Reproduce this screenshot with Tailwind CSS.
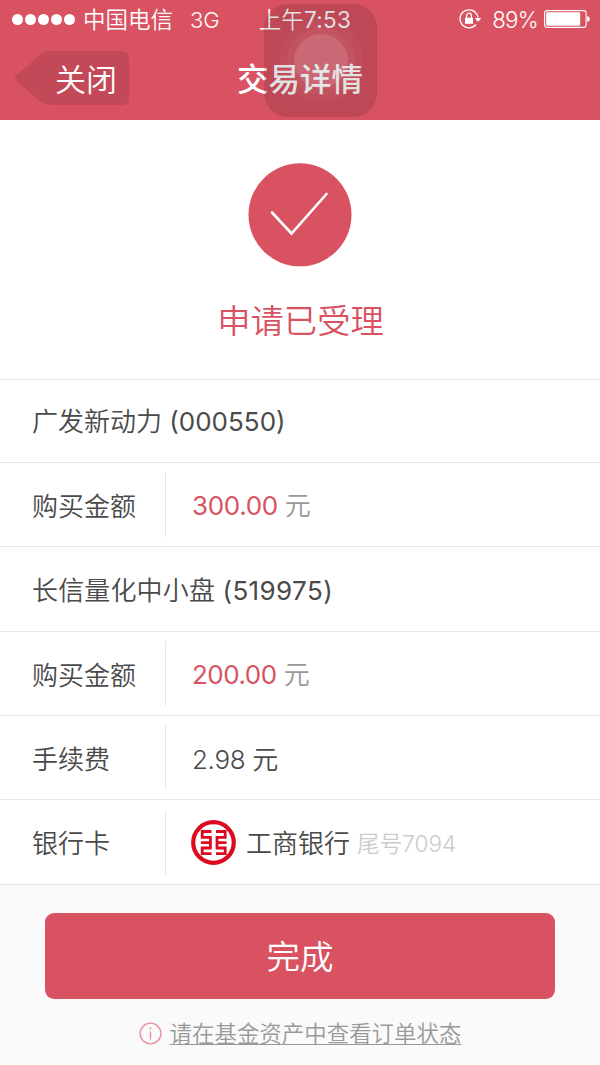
<!DOCTYPE html>
<html lang="zh-CN">
<head>
    <meta charset="UTF-8">
    <meta name="viewport" content="width=device-width, initial-scale=1.0">
    <title>交易详情</title>
    <script src="https://cdn.jsdelivr.net/npm/@tailwindcss/browser@4"></script>
</head>
<body class="bg-[#fafafa] font-[Inter,'Noto_Sans_CJK_SC',sans-serif] font-[350] text-[#4a4a4a] h-[1065px] overflow-hidden">
    <header class="relative bg-[#d95261] h-[120px] text-white">
        <!-- Status bar -->
        <div class="grid grid-cols-3 items-center h-[40px] pl-3 pr-[10px] text-[22.5px] leading-none">
            <div class="flex items-center whitespace-nowrap">
                <div class="flex gap-[2px] pb-[2px]">
                    <span class="size-[11px] rounded-full bg-white"></span>
                    <span class="size-[11px] rounded-full bg-white"></span>
                    <span class="size-[11px] rounded-full bg-white"></span>
                    <span class="size-[11px] rounded-full bg-white"></span>
                    <span class="size-[11px] rounded-full bg-white"></span>
                </div>
                <span class="ml-2">中国电信</span>
                <span class="ml-[17px] text-[22px]">3G</span>
            </div>
            <div class="text-center pl-2 whitespace-nowrap">上午<span class="font-normal tracking-[0.3px]">7:53</span></div>
            <div class="flex items-center justify-end pb-[2px]">
                <svg class="w-[24px] h-[22px]" viewBox="0 0 24 22" fill="none" stroke="#fff" stroke-width="1.3">
                    <path d="M18.5 5.8A9 9 0 1 0 18 16.5M20 9.5A9 9 0 0 0 17 4"/>
                    <rect x="7" y="9.8" width="8" height="6" fill="#fff" stroke="none"/>
                    <path d="M8.6 10V7.6a2.4 2.4 0 0 1 4.8 0V10"/>
                    <path d="M16.8 10h6.4L20 14z" fill="#fff" stroke="none"/>
                </svg>
                <span class="ml-[10px] pt-[2px] text-[22.3px] tracking-[-0.7px]">89%</span>
                <svg class="ml-[6px] w-[46px] h-[18px]" viewBox="0 0 46 18">
                    <rect x=".6" y=".6" width="41.5" height="16.8" rx="2.5" fill="none" stroke="#fff" stroke-width="1.1"/>
                    <rect x="2.2" y="2.2" width="34" height="13.6" rx="1" fill="#fff"/>
                    <path d="M43.2 6q2.6.5 2.6 3t-2.6 3z" fill="#fff"/>
                </svg>
            </div>
        </div>

        <!-- Nav bar -->
        <div class="grid grid-cols-3 items-center h-[76px]">
            <button class="relative w-[130px] h-[54px] pl-[55px] text-left text-[31px] leading-none">
                <svg class="absolute inset-0" width="130" height="54" viewBox="0 0 130 54" fill="#c44958">
                    <path d="M16 24.5L40 4Q45 0 50 0H122Q129 0 129 7V47Q129 54 122 54H50Q45 54 40 50L16 29.5Q14 27 16 24.5Z"/>
                </svg>
                <span class="relative block pt-[2px]">关闭</span>
            </button>
            <h1 class="pt-[4px] text-center text-[31.5px] leading-none font-medium whitespace-nowrap">交易详情</h1>
        </div>

        <!-- AssistiveTouch button -->
        <div class="absolute left-[264px] top-[4px] size-[113px] rounded-[24px] bg-black/12 flex items-center justify-center">
            <div class="size-[84px] rounded-full bg-white/3 flex items-center justify-center">
                <div class="size-[68px] rounded-full bg-white/4 flex items-center justify-center">
                    <div class="size-[54px] rounded-full bg-white/13"></div>
                </div>
            </div>
        </div>
    </header>

    <main class="bg-white">
        <section class="h-[259px] pt-[43px] flex flex-col items-center text-[#d95261]">
            <svg class="size-[104px]" viewBox="0 0 104 104">
                <circle cx="52" cy="51.8" r="51.5" fill="#d95261"/>
                <path d="M24 49.5L43.5 70.5L78.5 31" fill="none" stroke="#fff" stroke-width="2.6" stroke-linecap="round"/>
            </svg>
            <p class="mt-[30px] pl-px text-[33.3px] leading-[48px]">申请已受理</p>
        </section>

        <ul class="text-[26px] leading-none border-b border-[#e6e6e6]">
            <li class="h-[83px] pt-[2px] border-t border-[#e6e6e6] flex items-center pl-8">
                <span>广发新动力 <span class="font-normal">(000550)</span></span>
            </li>
            <li class="h-[84px] border-t border-[#e6e6e6] flex items-center pl-8">
                <span class="w-[133px] pt-[4px]">购买金额</span>
                <div class="h-[65px] pt-[3px] border-l border-[#e6e6e6] pl-[26px] flex items-center">
                    <span class="font-normal text-[#d95261] tracking-[-0.35px]">300.00</span><span class="ml-[7px] text-[#999]">元</span>
                </div>
            </li>
            <li class="h-[85px] pt-[3px] border-t border-[#e6e6e6] flex items-center pl-8">
                <span class="tracking-[0.15px]">长信量化中小盘 <span class="font-normal tracking-[0.4px]">(519975)</span></span>
            </li>
            <li class="h-[84px] border-t border-[#e6e6e6] flex items-center pl-8">
                <span class="w-[133px] pt-[4px]">购买金额</span>
                <div class="h-[65px] pt-[3px] border-l border-[#e6e6e6] pl-[26px] flex items-center">
                    <span class="font-normal text-[#d95261] tracking-[-0.5px]">200.00</span><span class="ml-[7px] text-[#999]">元</span>
                </div>
            </li>
            <li class="h-[84px] border-t border-[#e6e6e6] flex items-center pl-8">
                <span class="w-[133px] pt-[4px]">手续费</span>
                <div class="h-[65px] pt-[4px] border-l border-[#e6e6e6] pl-[26px] flex items-center">
                    <span class="tracking-[-0.35px]">2.98 元</span>
                </div>
            </li>
            <li class="h-[85px] border-t border-[#e6e6e6] flex items-center pl-8">
                <span class="w-[133px] pt-[4px]">银行卡</span>
                <div class="h-[65px] border-l border-[#e6e6e6] pl-[25px] flex items-center">
                    <svg class="size-[45px]" viewBox="0 0 45 45" fill="none" stroke="#dc0a1e">
                        <circle cx="22.5" cy="22.5" r="20.3" stroke-width="4.2"/>
                        <path stroke-width="2.8" d="M20.5 11.5H11.2V17.3H19.4V22.5M20.5 33.7H11.2V28H19.4V22.5M9.9 22.7H19.4M25 11.5H34.2V17.3H26V22.5M25 33.7H34.2V28H26V22.5M35.5 22.7H26"/>
                    </svg>
                    <span class="ml-[10px] pt-[4px]">工商银行</span>
                    <span class="ml-[7px] pt-[4px] text-[22.6px] text-[#ccc]">尾号7094</span>
                </div>
            </li>
        </ul>
    </main>

    <footer class="pt-[28px] px-[45px]">
        <button class="block w-full h-[86px] pt-[4px] rounded-[9px] bg-[#d95261] text-white text-[33.5px] leading-none">完成</button>
        <div class="mt-[20px] flex items-center justify-center">
            <svg class="size-[23px]" viewBox="0 0 23 23" fill="none" stroke="#e8949e" stroke-width="1.4">
                <circle cx="11.5" cy="11.5" r="10.4"/>
                <path d="M11.5 9.5V17.5M11.5 5.5V7.5"/>
            </svg>
            <a href="#" class="ml-2 pt-[2px] text-[22.46px] leading-[26px] text-[#999] underline decoration-1 underline-offset-2 [text-decoration-skip-ink:none]">请在基金资产中查看订单状态</a>
        </div>
    </footer>
</body>
</html>
